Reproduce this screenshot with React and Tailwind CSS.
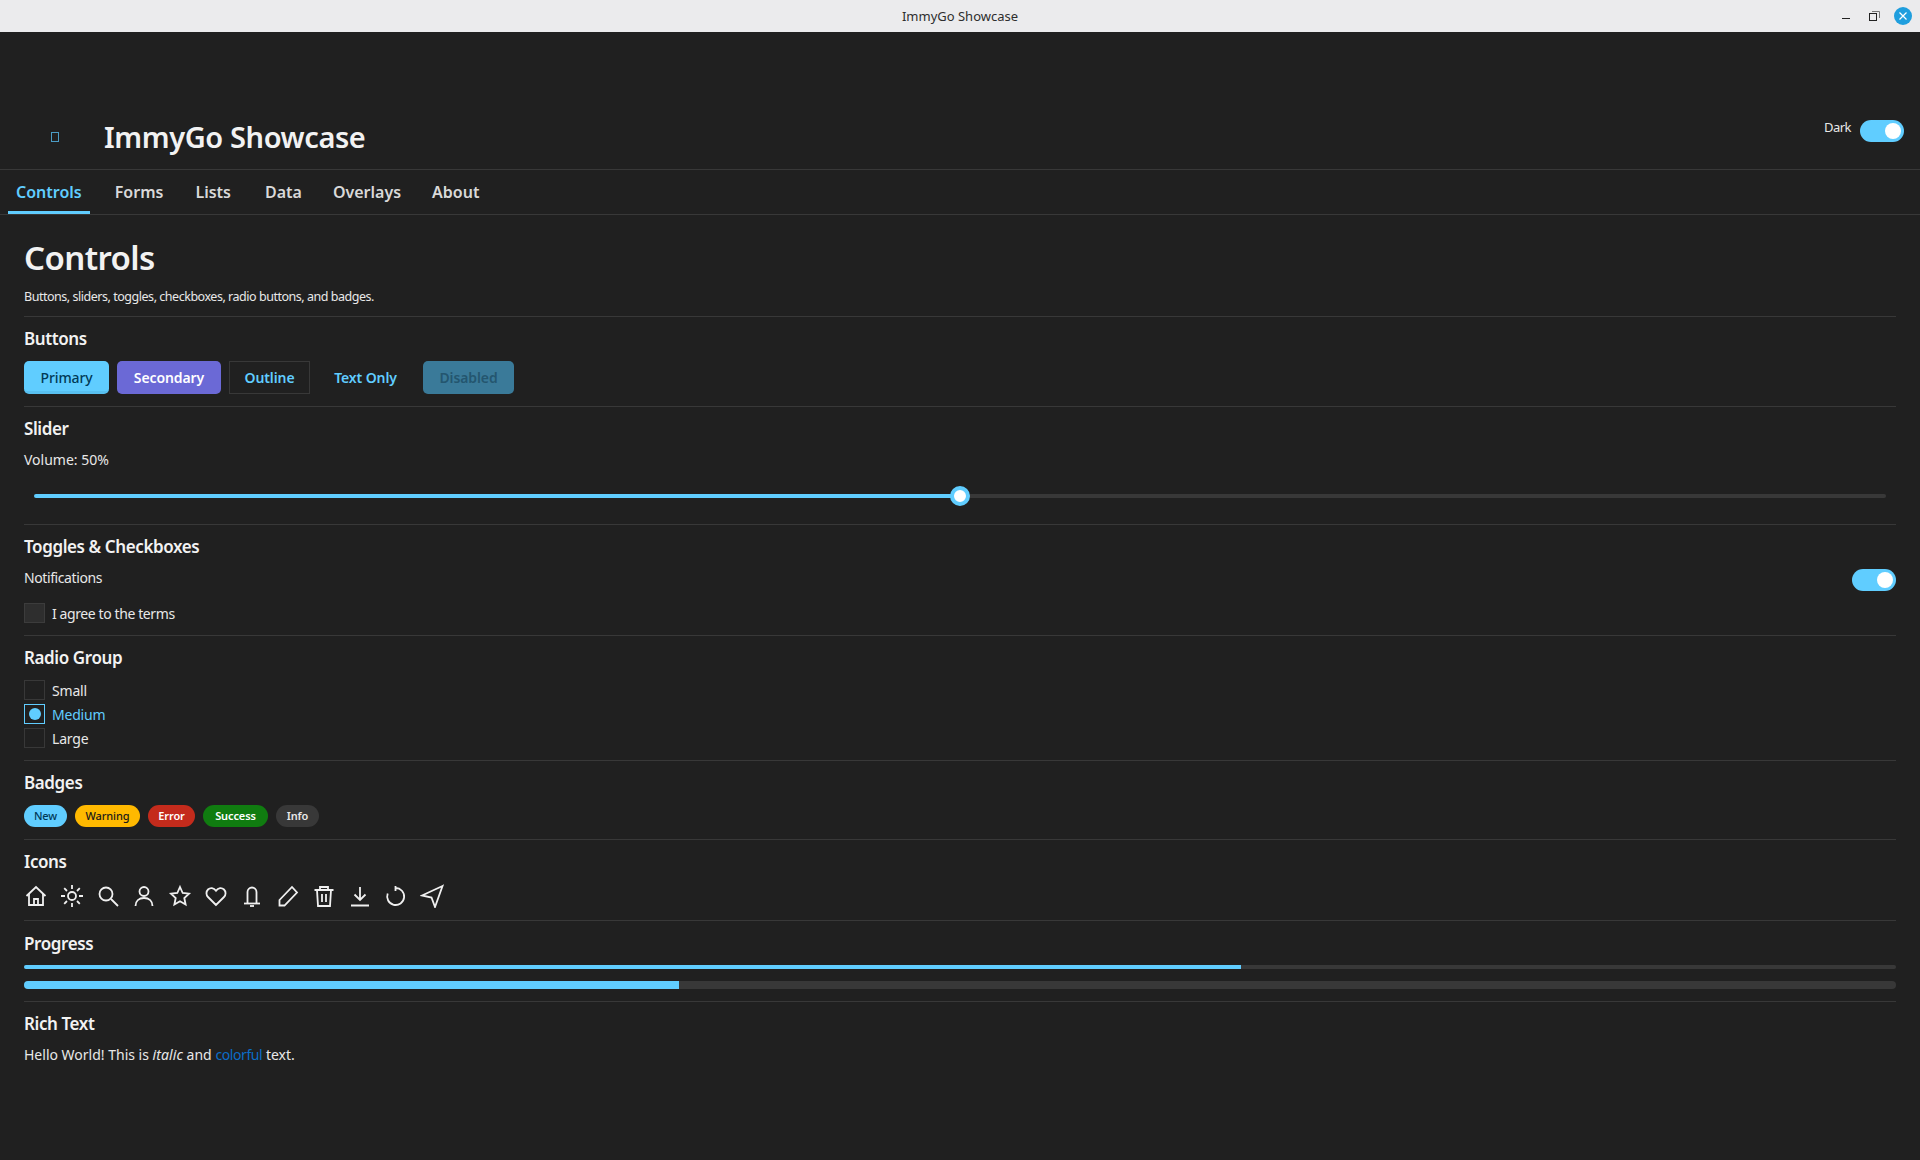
import React from 'react';

const tabs = [
  { name: 'Controls', gap: 'mr-[17px]' },
  { name: 'Forms', gap: 'mr-[16px]' },
  { name: 'Lists', gap: 'mr-[18px]' },
  { name: 'Data', gap: 'mr-[15px]' },
  { name: 'Overlays', gap: 'mr-[15px]' },
  { name: 'About', gap: '' },
];

function Divider() {
  return <div className="h-px shrink-0 bg-[#383838]" />;
}

function Section({ title, children, className = '' }) {
  return (
    <section className={className}>
      <h2 className="text-[17px] leading-[24px] font-semibold tracking-[-0.4px] text-[#f2f2f2]">{title}</h2>
      {children}
    </section>
  );
}

function Toggle() {
  return (
    <div className="w-[44px] h-[22px] rounded-full bg-[#60cdff] flex items-center justify-end pr-[3px]">
      <div className="w-4 h-4 rounded-full bg-white" />
    </div>
  );
}

function Button({ className, children }) {
  return (
    <button className={`h-[33px] flex items-center justify-center text-[14px] tracking-[-0.1px] ${className}`}>
      {children}
    </button>
  );
}

function Radio({ label, selected }) {
  return (
    <div className="flex items-center h-[20px] gap-[7px]">
      <div className={`w-[21px] h-[20px] border flex items-center justify-center ${selected ? 'border-[#60cdff]' : 'border-[#383838]'}`}>
        {selected && <div className="w-3 h-3 rounded-full bg-[#60cdff]" />}
      </div>
      <span className={`text-[14px] tracking-[-0.2px] ${selected ? 'text-[#60cdff]' : 'text-[#e8e8e8]'}`}>{label}</span>
    </div>
  );
}

function Badge({ className, children }) {
  return (
    <span className={`h-[22px] rounded-full flex items-center justify-center text-[11px] tracking-[-0.1px] ${className}`}>
      {children}
    </span>
  );
}

const icons = [
  <><path d="M2.500 12 12 3l9.500 9" /><path d="M5 10v11h14V10" /><path d="M10 21v-6h4v6" /></>,
  <><circle cx="12" cy="12" r="4" /><path d="M12 1v4M12 19v4M1 12h4M19 12h4M4.200 4.200 7 7M17 17l2.800 2.800M4.200 19.800 7 17M17 7l2.800-2.800" /></>,
  <><circle cx="10" cy="10" r="6.500" /><path d="m15 15 7 7" /></>,
  <><circle cx="12" cy="7.500" r="4.500" /><path d="M3.500 22c0-5 3.500-8 8.500-8s8.500 3 8.500 8" /></>,
  <path d="m12 3 2.700 6 6.300.7-4.700 4.300 1.300 6.500-5.600-3.300-5.600 3.300 1.300-6.500L3 9.700 9.300 9z" />,
  <path d="M12 21 4 13a5.300 5.300 0 0 1 0-7.500c2.200-2.100 5.700-2 8 1.200 2.300-3.200 5.800-3.300 8-1.200a5.300 5.300 0 0 1 0 7.500z" />,
  <><path d="M7.500 19V8a4.500 4.500 0 0 1 9 0v11" /><path d="M4 19.500h16" /><path d="M10 22h4" /></>,
  <path d="M3.500 21.500v-5.500L16 3l5 5.500L8.500 21.500z" />,
  <><path d="M2.500 6h19M8 6V3h8v3M5 6l1 16h12l1-16M10 10v8M14 10v8" /></>,
  <><path d="M12 3v13M6.500 10.500 12 16l5.500-5.500M3 21.500h18" /></>,
  <path d="M11.500 4A8.500 8.500 0 1 1 3.700 9.500M11.500 2v5" />,
  <path d="M22.500 2 2 11.500l9.500 2L15 23z" />,
];

function App() {
  return (
    <div className='font-["Noto_Sans",sans-serif] w-full h-[1160px] bg-[#202020] text-[#e8e8e8] flex flex-col overflow-hidden'>
      <div className="h-8 shrink-0 bg-[#ebebed] flex items-center justify-center relative text-[13px] text-[#2e2e2e] pt-[1px]">
        ImmyGo Showcase
        <div className="absolute right-[8px] top-[7px] flex items-center">
          <div className="w-2 h-px bg-[#222] mt-[4px]" />
          <svg className="ml-[19px] mr-[14px]" width="11" height="11" viewBox="0 0 11 11" fill="none" stroke="#222"><rect x="0.5" y="2.500" width="7" height="7" /><path d="M3 .5h7.500V7" stroke="#777" /></svg>
          <div className="w-[18px] h-[18px] rounded-full bg-[#1f9ede] flex items-center justify-center">
            <svg width="8" height="8" viewBox="0 0 8 8" stroke="#fff" strokeWidth="1.200"><path d="m.5.5 7 7M7.500.5l-7 7" /></svg>
          </div>
        </div>
      </div>

      <header className="h-[138px] shrink-0 flex items-start justify-between border-b border-[#383838]">
        <div className="flex items-center mt-[88px] h-[34px]">
          <div className="w-2 h-[10px] border border-[#4b9cc4] ml-[51px]" />
          <h1 className="ml-[45px] text-[29px] leading-[34px] font-semibold tracking-[-0.4px] text-[#f2f2f2]">ImmyGo Showcase</h1>
        </div>
        <div className="flex items-center gap-[9px] mt-[88px] mr-4">
          <span className="text-[13px] tracking-[-0.5px] text-[#e8e8e8] -mt-[6px]">Dark</span>
          <Toggle />
        </div>
      </header>

      <nav className="h-[45px] shrink-0 flex border-b border-[#383838] pl-2">
        {tabs.map((t, i) => (
          <div
            key={t.name}
            className={`px-2 h-[44px] pt-[3px] flex items-center text-[16px] font-semibold border-b-[3px] ${t.gap} ${i === 0 ? 'border-[#60cdff] text-[#60cdff]' : 'border-transparent text-[#d9d9d9]'}`}
          >
            {t.name}
          </div>
        ))}
      </nav>

      <main className="px-6 flex flex-col">
        <h1 className="mt-[23px] text-[33px] leading-[40px] font-semibold tracking-[-0.6px] text-[#f2f2f2]">Controls</h1>
        <p className="mt-[10px] text-[12.5px] leading-[18px] tracking-[-0.47px] mb-[10px]">Buttons, sliders, toggles, checkboxes, radio buttons, and badges.</p>
        <Divider />

        <Section title="Buttons" className="pt-[10px] pb-[12px]">
          <div className="flex mt-[10px] items-center">
            <Button className="w-[85px] pt-[3px] rounded-[5px] border-b-[3px] border-[#58c0f0] font-medium bg-[#60cdff] text-[#003a57]">Primary</Button>
            <Button className="w-[104px] ml-2 rounded-[5px] font-semibold bg-[#6b69d6] text-white">Secondary</Button>
            <Button className="w-[81px] ml-2 border border-[#383838] font-semibold text-[#60cdff]">Outline</Button>
            <Button className="w-[95px] ml-2 font-semibold text-[#60cdff]">Text Only</Button>
            <Button className="w-[91px] ml-[10px] rounded-[5px] font-semibold bg-[#3a7a99] text-[#24566f]">Disabled</Button>
          </div>
        </Section>
        <Divider />

        <Section title="Slider" className="pt-[10px]">
          <div className="mt-[9px] text-[14px] leading-[20px]">Volume: 50%</div>
          <div className="mt-[16px] mx-[10px] h-[20px] flex items-center relative mb-[18px]">
            <div className="h-1 w-1/2 bg-[#60cdff] rounded-l-full" />
            <div className="h-1 w-1/2 bg-[#383838] rounded-r-full" />
            <div className="absolute left-1/2 -translate-x-1/2 w-5 h-5 rounded-full bg-white border-[4px] border-[#60cdff]" />
          </div>
        </Section>
        <Divider />

        <Section title="Toggles & Checkboxes" className="pt-[10px] pb-[12px]">
          <div className="flex justify-between items-center mt-[9px] h-[24px]">
            <span className="text-[14px] tracking-[-0.4px] -mt-[6px]">Notifications</span>
            <Toggle />
          </div>
          <div className="flex items-center gap-[7px] mt-[11px] h-[20px]">
            <div className="w-[21px] h-[20px] bg-[#2e2e2e] border border-[#3c3c3c]" />
            <span className="text-[14px] tracking-[-0.4px]">I agree to the terms</span>
          </div>
        </Section>
        <Divider />

        <Section title="Radio Group" className="pt-[10px] pb-[12px]">
          <div className="flex flex-col gap-1 mt-[10px]">
            <Radio label="Small" />
            <Radio label="Medium" selected />
            <Radio label="Large" />
          </div>
        </Section>
        <Divider />

        <Section title="Badges" className="pt-[10px] pb-[12px]">
          <div className="flex gap-2 mt-[10px]">
            <Badge className="w-[43px] font-medium bg-[#60cdff] text-[#003a57]">New</Badge>
            <Badge className="w-[65px] font-medium bg-[#ffb900] text-[#1a1a1a]">Warning</Badge>
            <Badge className="w-[47px] font-semibold bg-[#c42b1c] text-white">Error</Badge>
            <Badge className="w-[65px] font-semibold bg-[#107c10] text-white">Success</Badge>
            <Badge className="w-[43px] font-semibold bg-[#383838] text-[#e8e8e8]">Info</Badge>
          </div>
        </Section>
        <Divider />

        <Section title="Icons" className="pt-[10px] pb-[12px]">
          <div className="flex gap-[12px] mt-[10px]">
            {icons.map((icon, i) => (
              <svg key={i} width="24" height="24" viewBox="0 0 24 24" fill="none" stroke="#f0f0f0" strokeWidth="1.800">
                {icon}
              </svg>
            ))}
          </div>
        </Section>
        <Divider />

        <Section title="Progress" className="pt-[11px] pb-[12px]">
          <div className="h-1 mt-[9px] rounded-full bg-[#383838] overflow-hidden"><div className="h-full w-[65%] bg-[#60cdff]" /></div>
          <div className="h-2 mt-[12px] rounded-full bg-[#383838] overflow-hidden"><div className="h-full w-[35%] bg-[#60cdff]" /></div>
        </Section>
        <Divider />

        <Section title="Rich Text" className="pt-[10px]">
          <p className="mt-[9px] text-[14px] leading-[20px]">
            Hello World! This is <em className="tracking-[0.1px]">italic</em> and <span className="text-[#0b6dc8] tracking-[-0.4px]">colorful</span> text.
          </p>
        </Section>
      </main>
    </div>
  );
}

export default App;
